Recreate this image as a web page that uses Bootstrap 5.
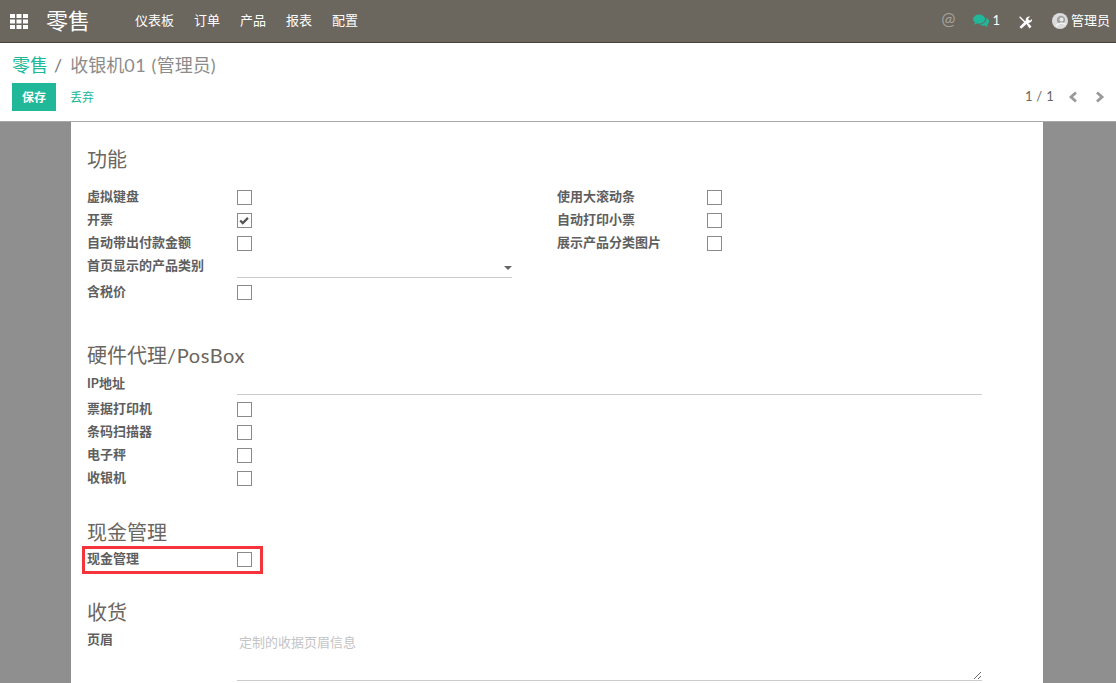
<!DOCTYPE html>
<html lang="zh-CN">
<head>
    <meta charset="UTF-8">
    <meta name="viewport" content="width=device-width, initial-scale=1.0">
    <title>零售</title>
    <link href="https://cdn.jsdelivr.net/npm/bootstrap@5.3.0/dist/css/bootstrap.min.css" rel="stylesheet">
    <style>
        html, body {
            height: 100%;
            overflow: hidden;
        }
        body {
            font-family: Lato, "Noto Sans CJK SC", sans-serif;
            font-size: 13px;
            color: #666;
            background-color: #8f8f8f;
        }
        .top-bar {
            --bs-navbar-nav-link-padding-x: 10px;
            height: 43px;
            padding: 0;
            background-color: #6b665e;
            border-bottom: 1px solid #45423d;
        }
        .apps-icon {
            margin-left: 10px;
            margin-right: 18px;
        }
        .app-title {
            width: 79px;
            font-size: 22px;
            color: #fff;
            line-height: 42px;
        }
        .top-bar .nav-link {
            font-size: 13px;
            line-height: 40px;
            padding-top: 0;
            padding-bottom: 2px;
            color: #fff;
        }
        .top-right {
            color: #fff;
            font-size: 13px;
            padding-right: 6px;
        }
        .at-sign {
            font-size: 17px;
            line-height: 20px;
            color: #a5a29c;
            margin-right: 18px;
            margin-top: -5px;
        }
        .msg-count {
            margin-left: 3px;
            margin-right: 19px;
        }
        .tools-icon {
            margin-right: 20px;
            margin-top: 3px;
        }
        .user-name {
            margin-left: 3px;
        }
        .control-panel {
            height: 79px;
            padding: 9px 11px 0 12px;
            background-color: #fff;
            border-bottom: 1px solid #a8a8a8;
        }
        .control-panel .breadcrumb {
            margin: 0 0 5px;
            font-size: 18px;
            line-height: 26px;
        }
        .control-panel .breadcrumb-item a {
            color: #21b799;
            text-decoration: none;
        }
        .control-panel .breadcrumb-item + .breadcrumb-item {
            padding-left: 6px;
        }
        .control-panel .breadcrumb-item + .breadcrumb-item::before {
            color: #777;
            padding-right: 8px;
        }
        .control-panel .breadcrumb-item.active {
            color: #8b8b8b;
        }
        .latin-wide {
            letter-spacing: 0.6px;
        }
        .btn-save {
            --bs-btn-padding-x: 10px;
            --bs-btn-padding-y: 0;
            --bs-btn-font-size: 12px;
            --bs-btn-font-weight: 700;
            --bs-btn-line-height: 27px;
            --bs-btn-color: #fff;
            --bs-btn-bg: #21b799;
            --bs-btn-border-width: 0;
            --bs-btn-border-radius: 0;
            padding-top: 1px;
        }
        .btn-discard {
            --bs-btn-padding-x: 14px;
            --bs-btn-padding-y: 0;
            --bs-btn-font-size: 12px;
            --bs-btn-line-height: 27px;
            --bs-btn-color: #21b799;
            --bs-btn-border-width: 0;
            padding-top: 1px;
        }
        .pager-text {
            font-size: 13px;
            color: #666;
            margin-right: 14px;
            letter-spacing: 0.3px;
            margin-top: -1px;
        }
        .pager-gap {
            margin-right: 17px;
        }
        .form-sheet {
            width: 972px;
            margin-left: 71px;
            padding: 23px 61px 0 16px;
            background-color: #fff;
            flex: 1 1 auto;
            overflow: hidden;
        }
        .group-title {
            font-size: 20px;
            font-weight: 400;
            line-height: 28px;
            margin: 0 0 3px;
            color: #6b665e;
        }
        .first-title {
            margin-bottom: 13px;
        }
        .form-section {
            margin-bottom: 37px;
        }
        .hardware-section {
            margin-bottom: 28px;
        }
        .cash-section {
            margin-bottom: 27px;
        }
        .cash-section .group-title,
        .receipt-section .group-title {
            margin-bottom: 2px;
        }
        .receipt-section {
            margin-bottom: 0;
        }
        .half-col {
            width: 425px;
            margin-right: 45px;
        }
        .field-row {
            min-height: 23px;
        }
        .field-label {
            flex: 0 0 150px;
            font-weight: 700;
            line-height: 21px;
            padding-bottom: 2px;
            color: #5f5f5f;
        }
        .check-box {
            display: block;
            width: 15px;
            height: 15px;
            margin: 0;
            appearance: none;
            background-color: #fff;
            border: 1px solid #8a8a8a;
            border-radius: 0;
        }
        .check-box:checked {
            background: #fff url("data:image/svg+xml,%3Csvg xmlns='http://www.w3.org/2000/svg' viewBox='0 0 15 15'%3E%3Cpath d='M2.5 7.5l3 3 6-6' fill='none' stroke='%23555' stroke-width='2.6'/%3E%3C/svg%3E") center no-repeat;
        }
        .select-row {
            height: 26px;
        }
        .select-row .field-label {
            line-height: 20px;
        }
        .line-field {
            flex: 1 1 auto;
            height: 23px;
            border-bottom: 1px solid #ccc;
        }
        .select-field {
            height: 23px;
        }
        .select-arrow {
            border-top: 4px solid #666;
            border-left: 4px solid transparent;
            border-right: 4px solid transparent;
            margin-top: 11px;
            margin-right: 0;
        }
        .ip-row {
            margin-bottom: 3px;
        }
        .ip-row .field-label {
            line-height: 23px;
            padding-bottom: 0;
        }
        .cash-row {
            position: relative;
        }
        .cash-mark {
            position: absolute;
            left: -5px;
            top: -2px;
            width: 181px;
            height: 28px;
            border: 3px solid #f5333a;
        }
        .receipt-row .field-label {
            padding-top: 1px;
        }
        .receipt-area {
            flex: 1 1 auto;
            display: block;
            height: 53px;
            padding: 5px 2px;
            font-size: 13px;
            line-height: 18px;
            color: #666;
            border: 0;
            border-bottom: 1px solid #ccc;
            outline: 0;
        }
        .receipt-area::placeholder {
            color: #c4c4c4;
        }
    </style>
</head>
<body class="d-flex flex-column">
    <nav class="navbar navbar-expand top-bar">
        <svg class="apps-icon" width="18" height="15" viewBox="0 0 18 15" fill="#fff">
            <rect x="0" y="0" width="5" height="4"/><rect x="6.5" y="0" width="5" height="4"/><rect x="13" y="0" width="5" height="4"/>
            <rect x="0" y="5.5" width="5" height="4"/><rect x="6.5" y="5.5" width="5" height="4"/><rect x="13" y="5.5" width="5" height="4"/>
            <rect x="0" y="11" width="5" height="4"/><rect x="6.5" y="11" width="5" height="4"/><rect x="13" y="11" width="5" height="4"/>
        </svg>
        <span class="app-title">零售</span>
        <ul class="navbar-nav">
            <li class="nav-item"><a class="nav-link" href="#">仪表板</a></li>
            <li class="nav-item"><a class="nav-link" href="#">订单</a></li>
            <li class="nav-item"><a class="nav-link" href="#">产品</a></li>
            <li class="nav-item"><a class="nav-link" href="#">报表</a></li>
            <li class="nav-item"><a class="nav-link" href="#">配置</a></li>
        </ul>
        <div class="d-flex align-items-center ms-auto top-right">
            <span class="at-sign">@</span>
            <svg width="16" height="14" viewBox="0 0 17 14" fill="#21b799">
                <ellipse cx="6.5" cy="5" rx="6.5" ry="4.8"/>
                <path d="M2.5 8l-1.5 3 4-1.6z"/>
                <path d="M14.2 3.6c1.7.9 2.8 2.3 2.8 3.9 0 1.4-.8 2.6-2 3.5l1 2.6-3.6-1.7c-2 .2-4.2-.2-5.5-1.4 3.8.2 7.6-2.2 7.3-6.9z"/>
            </svg>
            <span class="msg-count">1</span>
            <svg class="tools-icon" width="13" height="13" viewBox="0 0 13 13" fill="#fff">
                <!-- screwdriver -->
                <path d="M1 .3L2.8 2l3.6 3.6-1 1L1.800 3 .2 1.200z"/>
                <path d="M7 7.200l1.300-1.200 4.200 4.400-2 2.200z"/>
                <!-- wrench -->
                <path d="M.5 11l6.300-6.500C6.300 2.600 7.800.4 10.300.4l.9.2-2 2 .5 1.500 1.500.5 2-1.900c.4 2.600-2 4.800-4.600 4.200L2.300 12.800z"/>
            </svg>
            <svg width="16" height="16" viewBox="0 0 16 16">
                <circle cx="8" cy="8" r="8" fill="#dcdcdc"/>
                <circle cx="9" cy="7" r="4.200" fill="#a2a2a2"/>
                <circle cx="9.500" cy="6.500" r="2" fill="#e8e8e8"/>
                <path d="M4 13.500c1-3 6-4.500 9.500-2" stroke="#f4f4f4" stroke-width="1.500" fill="none"/>
            </svg>
            <span class="user-name">管理员</span>
        </div>
    </nav>

    <div class="control-panel flex-shrink-0">
        <ol class="breadcrumb">
            <li class="breadcrumb-item"><a href="#">零售</a></li>
            <li class="breadcrumb-item active">收银机<span class="latin-wide">01 (</span>管理员<span class="latin-wide">)</span></li>
        </ol>
        <div class="d-flex align-items-center">
            <button class="btn btn-save">保存</button>
            <button class="btn btn-discard">丢弃</button>
            <div class="d-flex align-items-center ms-auto">
                <span class="pager-text">1 / 1</span>
                <svg width="10" height="12" viewBox="0 0 10 12" class="pager-gap"><path d="M8 1.500L3 6l5 4.500" fill="none" stroke="#999" stroke-width="2.800"/></svg>
                <svg width="10" height="12" viewBox="0 0 10 12"><path d="M2 1.500L7 6l-5 4.500" fill="none" stroke="#999" stroke-width="2.800"/></svg>
            </div>
        </div>
    </div>

    <main class="form-sheet">
        <section class="form-section">
            <h2 class="group-title first-title">功能</h2>
            <div class="d-flex">
                <div class="half-col">
                    <div class="d-flex align-items-center field-row"><span class="field-label">虚拟键盘</span><input type="checkbox" class="check-box"></div>
                    <div class="d-flex align-items-center field-row"><span class="field-label">开票</span><input type="checkbox" class="check-box" checked></div>
                    <div class="d-flex align-items-center field-row"><span class="field-label">自动带出付款金额</span><input type="checkbox" class="check-box"></div>
                    <div class="d-flex select-row"><span class="field-label">首页显示的产品类别</span><div class="line-field select-field d-flex justify-content-end"><span class="select-arrow"></span></div></div>
                    <div class="d-flex align-items-center field-row"><span class="field-label">含税价</span><input type="checkbox" class="check-box"></div>
                </div>
                <div class="flex-grow-1">
                    <div class="d-flex align-items-center field-row"><span class="field-label">使用大滚动条</span><input type="checkbox" class="check-box"></div>
                    <div class="d-flex align-items-center field-row"><span class="field-label">自动打印小票</span><input type="checkbox" class="check-box"></div>
                    <div class="d-flex align-items-center field-row"><span class="field-label">展示产品分类图片</span><input type="checkbox" class="check-box"></div>
                </div>
            </div>
        </section>

        <section class="form-section hardware-section">
            <h2 class="group-title">硬件代理<span class="latin-wide">/PosBox</span></h2>
            <div class="d-flex ip-row"><span class="field-label">IP地址</span><div class="line-field"></div></div>
            <div class="d-flex align-items-center field-row"><span class="field-label">票据打印机</span><input type="checkbox" class="check-box"></div>
            <div class="d-flex align-items-center field-row"><span class="field-label">条码扫描器</span><input type="checkbox" class="check-box"></div>
            <div class="d-flex align-items-center field-row"><span class="field-label">电子秤</span><input type="checkbox" class="check-box"></div>
            <div class="d-flex align-items-center field-row"><span class="field-label">收银机</span><input type="checkbox" class="check-box"></div>
        </section>

        <section class="form-section cash-section">
            <h2 class="group-title">现金管理</h2>
            <div class="d-flex align-items-center field-row cash-row">
                <span class="field-label">现金管理</span><input type="checkbox" class="check-box">
                <span class="cash-mark"></span>
            </div>
        </section>

        <section class="form-section receipt-section">
            <h2 class="group-title">收货</h2>
            <div class="d-flex receipt-row">
                <span class="field-label">页眉</span>
                <textarea class="receipt-area" placeholder="定制的收据页眉信息"></textarea>
            </div>
        </section>
    </main>

    <script src="https://cdn.jsdelivr.net/npm/bootstrap@5.3.0/dist/js/bootstrap.bundle.min.js"></script>
</body>
</html>
